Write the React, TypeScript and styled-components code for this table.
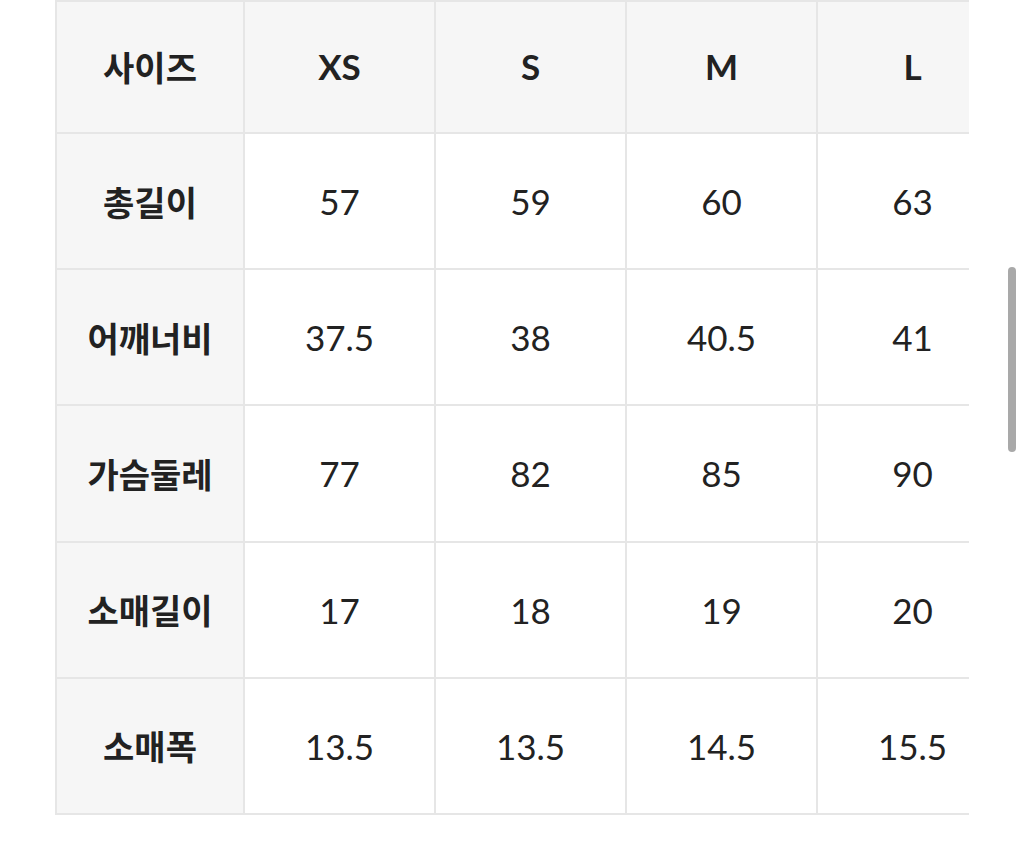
import { Fragment } from 'react';
import styled, { createGlobalStyle } from 'styled-components';

const GlobalStyle = createGlobalStyle`
  html, body {
    margin: 0;
    padding: 0;
    background: #ffffff;
    overflow: hidden;
  }
  body {
    font-family: 'Lato', 'Noto Sans CJK KR', sans-serif;
    color: #222222;
  }
`;

const Page = styled.div`
  position: relative;
  width: 1024px;
  height: 842px;
  padding-left: 55px;
  box-sizing: border-box;
`;

const TableScroll = styled.div`
  width: 914px;
  overflow: hidden;
`;

const Grid = styled.div`
  display: grid;
  grid-template-columns: 190px repeat(4, 191px);
  grid-template-rows: 134px repeat(5, 136.2px);
  width: max-content;
`;

const Cell = styled.div<{ $head?: boolean; $first?: boolean; $top?: boolean }>`
  display: flex;
  align-items: center;
  justify-content: center;
  box-sizing: border-box;
  border-right: 2px solid #e6e6e6;
  border-bottom: 2px solid #e6e6e6;
  border-left: ${(p) => (p.$first ? '2px solid #e6e6e6' : 'none')};
  border-top: ${(p) => (p.$top ? '2px solid #e6e6e6' : 'none')};
  background: ${(p) => (p.$head || p.$first ? '#f6f6f6' : '#ffffff')};
  font-size: ${(p) => (p.$first ? '34px' : '35px')};
  font-weight: ${(p) => (p.$head || p.$first ? 700 : 400)};
  color: #222222;
  padding-bottom: ${(p) => (p.$head ? '2px' : '0')};
`;

const ScrollThumb = styled.div`
  position: absolute;
  top: 267px;
  right: 8px;
  width: 8px;
  height: 185px;
  border-radius: 4px;
  background: #a9a9a9;
`;

const sizes = ['XS', 'S', 'M', 'L'];

const rows: { label: string; values: string[] }[] = [
  { label: '총길이', values: ['57', '59', '60', '63'] },
  { label: '어깨너비', values: ['37.5', '38', '40.5', '41'] },
  { label: '가슴둘레', values: ['77', '82', '85', '90'] },
  { label: '소매길이', values: ['17', '18', '19', '20'] },
  { label: '소매폭', values: ['13.5', '13.5', '14.5', '15.5'] },
];

export default function App() {
  return (
    <>
      <GlobalStyle />
      <Page>
        <TableScroll>
          <Grid>
            <Cell $head $first $top>
              사이즈
            </Cell>
            {sizes.map((s) => (
              <Cell key={s} $head $top>
                {s}
              </Cell>
            ))}
            {rows.map((row) => (
              <Fragment key={row.label}>
                <Cell $first>{row.label}</Cell>
                {row.values.map((v, i) => (
                  <Cell key={i}>{v}</Cell>
                ))}
              </Fragment>
            ))}
          </Grid>
        </TableScroll>
        <ScrollThumb />
      </Page>
    </>
  );
}
